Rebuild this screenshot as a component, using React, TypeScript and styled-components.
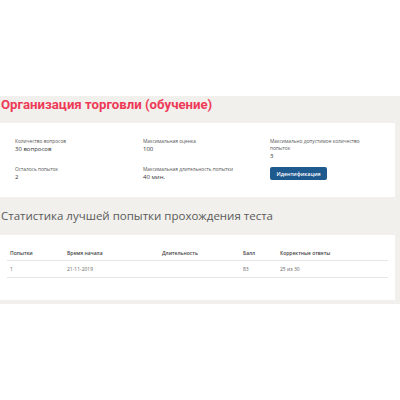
import React from "react";
import styled, { createGlobalStyle } from "styled-components";

const GlobalStyle = createGlobalStyle`
  body {
    margin: 0;
    background: #ffffff;
    font-family: "Open Sans", "Liberation Sans", sans-serif;
  }
`;

const fields = [
  { label: "Количество вопросов", value: "30 вопросов" },
  { label: "Максимальная оценка", value: "100" },
  { label: "Максимально допустимое количество попыток", value: "3" },
  { label: "Осталось попыток", value: "2" },
  { label: "Максимальная длительность попытки", value: "40 мин." },
];

const columns = ["Попытки", "Время начала", "Длительность", "Балл", "Корректные ответы"];
const rows = [["1", "21-11-2019", "", "83", "25 из 30"]];

function App() {
  return (
    <Page>
      <GlobalStyle />
      <Band>
        <Title>Организация торговли (обучение)</Title>
        <InfoCard>
          {fields.map((f, i) => (
            <Field key={i}>
              <Label>{f.label}</Label>
              <Value>{f.value}</Value>
            </Field>
          ))}
          <Field>
            <Button>Идентификация</Button>
          </Field>
        </InfoCard>
        <Subtitle>Статистика лучшей попытки прохождения теста</Subtitle>
        <TableCard>
          <Table>
            <colgroup>
              <col style={{ width: 57 }} />
              <col style={{ width: 95 }} />
              <col style={{ width: 81 }} />
              <col style={{ width: 37 }} />
              <col />
            </colgroup>
            <thead>
              <tr>
                {columns.map((c) => (
                  <Th key={c}>{c}</Th>
                ))}
              </tr>
            </thead>
            <tbody>
              {rows.map((r, i) => (
                <tr key={i}>
                  {r.map((cell, j) => (
                    <Td key={j}>{cell}</Td>
                  ))}
                </tr>
              ))}
            </tbody>
          </Table>
        </TableCard>
      </Band>
    </Page>
  );
}

export default App;

const Page = styled.div`
  padding-top: 96px;
`;

const Band = styled.section`
  background: #f1f0ec;
  padding: 0 5px 4px 0;
`;

const Title = styled.h1`
  margin: 0;
  padding-left: 1px;
  font-family: Roboto, "Open Sans", sans-serif;
  font-weight: 700;
  font-size: 13.2px;
  line-height: 17px;
  color: #ee3a57;
`;

const InfoCard = styled.div`
  margin-top: 10px;
  background: #ffffff;
  padding: 15px 0 16px 15px;
  display: grid;
  grid-template-columns: 128px 127px 92px;
  row-gap: 6px;
  align-items: start;
`;

const Field = styled.div`
  display: flex;
  flex-direction: column;
  align-items: flex-start;
`;

const Label = styled.div`
  font-size: 4.8px;
  line-height: 7px;
  color: #555555;
`;

const Value = styled.div`
  font-size: 6px;
  line-height: 8px;
  color: #333333;
`;

const Button = styled.button`
  margin-top: 1px;
  width: 57px;
  height: 13px;
  padding: 0;
  border: none;
  border-radius: 2px;
  background: #1f5a8f;
  color: #ffffff;
  font-family: "Open Sans", sans-serif;
  font-size: 5.3px;
  font-weight: 600;
`;

const Subtitle = styled.h2`
  margin: 12px 0 0;
  padding-left: 1px;
  font-family: "Open Sans", sans-serif;
  font-weight: 400;
  font-size: 11.5px;
  line-height: 14px;
  color: #5a5a5a;
`;

const TableCard = styled.div`
  margin-top: 12px;
  background: #ffffff;
  padding: 11px 7px 22px;
`;

const Table = styled.table`
  width: 381px;
  border-collapse: collapse;
  table-layout: fixed;
`;

const Th = styled.th`
  text-align: left;
  padding: 3px 3px;
  font-size: 5px;
  line-height: 8px;
  font-weight: 600;
  color: #444444;
  border-bottom: 1px solid #e6e6e6;
`;

const Td = styled.td`
  padding: 3px 3px;
  font-size: 5px;
  line-height: 10px;
  color: #666666;
  border-bottom: 1px solid #e6e6e6;
`;
